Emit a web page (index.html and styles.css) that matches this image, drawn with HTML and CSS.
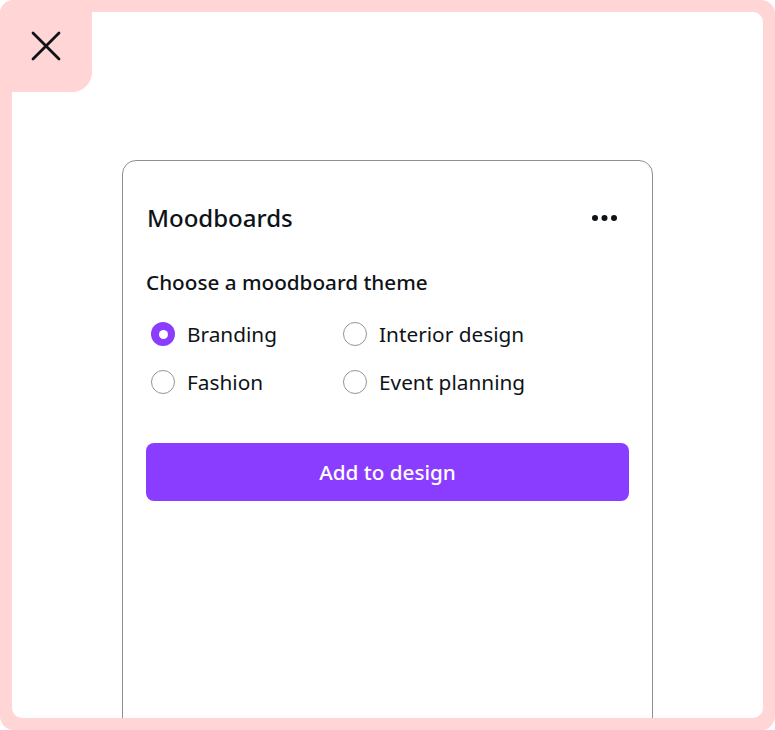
FILE: index.html
```html
<!DOCTYPE html>
<html lang="en">
<head>
<meta charset="utf-8">
<title>Moodboards</title>
<link rel="stylesheet" href="styles.css">
</head>
<body>
<div class="frame">
  <div class="tab">
    <svg class="close" width="32" height="32" viewBox="0 0 32 32" aria-hidden="true">
      <path d="M3 3 L29 29 M29 3 L3 29" stroke="#0e1318" stroke-width="2.8" stroke-linecap="round" fill="none"/>
    </svg>
  </div>
  <div class="canvas">
    <div class="card">
      <div class="card-header">
        <h1 class="title">Moodboards</h1>
        <svg class="more" width="28" height="8" viewBox="0 0 28 8" aria-hidden="true">
          <circle cx="4" cy="4" r="3" fill="#0e1318"/>
          <circle cx="13.5" cy="4" r="3" fill="#0e1318"/>
          <circle cx="23" cy="4" r="3" fill="#0e1318"/>
        </svg>
      </div>
      <p class="subtitle">Choose a moodboard theme</p>
      <div class="options">
        <label class="option"><span class="radio checked"></span><span class="label">Branding</span></label>
        <label class="option"><span class="radio"></span><span class="label">Interior design</span></label>
        <label class="option"><span class="radio"></span><span class="label">Fashion</span></label>
        <label class="option"><span class="radio"></span><span class="label">Event planning</span></label>
      </div>
      <button class="primary">Add to design</button>
    </div>
  </div>
</div>
</body>
</html>
```
FILE: styles.css
```css
* { box-sizing: border-box; }
html, body { margin: 0; padding: 0; background: #ffffff; }
body { font-family: "Noto Sans", "Open Sans", sans-serif; color: #0e1318; }

.frame {
  position: relative;
  width: 775px;
  height: 730px;
  background: #ffd5d6;
  border-radius: 14px;
  padding: 12px;
}

.tab {
  position: absolute;
  left: 0;
  top: 0;
  width: 92px;
  height: 92px;
  background: #ffd5d6;
  border-radius: 14px 0 20px 0;
  display: flex;
  align-items: center;
  justify-content: center;
  z-index: 2;
}

.canvas {
  width: 751px;
  height: 706px;
  background: #ffffff;
  border-radius: 10px;
  overflow: hidden;
  padding: 148px 0 0 110px;
}

.card {
  width: 531px;
  height: 640px;
  border: 1px solid #8f8f8f;
  border-radius: 14px;
  padding: 41px 23px 0 23px;
}

.card-header {
  display: flex;
  align-items: center;
  justify-content: space-between;
  height: 32px;
  padding-right: 10px;
}

.title {
  margin: 0;
  font-size: 24px;
  font-weight: 500;
  line-height: 32px;
  padding-left: 1px;
}

.subtitle {
  margin: 34px 0 0 0;
  font-size: 20.7px;
  font-weight: 500;
  line-height: 28px;
}

.options {
  display: grid;
  grid-template-columns: 192px 192px;
  row-gap: 16px;
  margin-top: 22px;
  padding-left: 5px;
}

.option {
  display: flex;
  align-items: center;
  gap: 12px;
  height: 32px;
}

.radio {
  width: 24px;
  height: 24px;
  border-radius: 50%;
  border: 1.5px solid #959595;
  flex: none;
}

.radio.checked {
  border: none;
  background: #8b3dff;
  display: flex;
  align-items: center;
  justify-content: center;
}

.radio.checked::after {
  content: "";
  width: 9px;
  height: 9px;
  border-radius: 50%;
  background: #ffffff;
}

.label {
  font-size: 20.8px;
  line-height: 28px;
}

.primary {
  display: block;
  width: 100%;
  height: 58px;
  margin-top: 45px;
  border: none;
  border-radius: 8px;
  background: #8b3dff;
  color: #ffffff;
  font-family: inherit;
  font-size: 20.7px;
  font-weight: 500;
}
```
